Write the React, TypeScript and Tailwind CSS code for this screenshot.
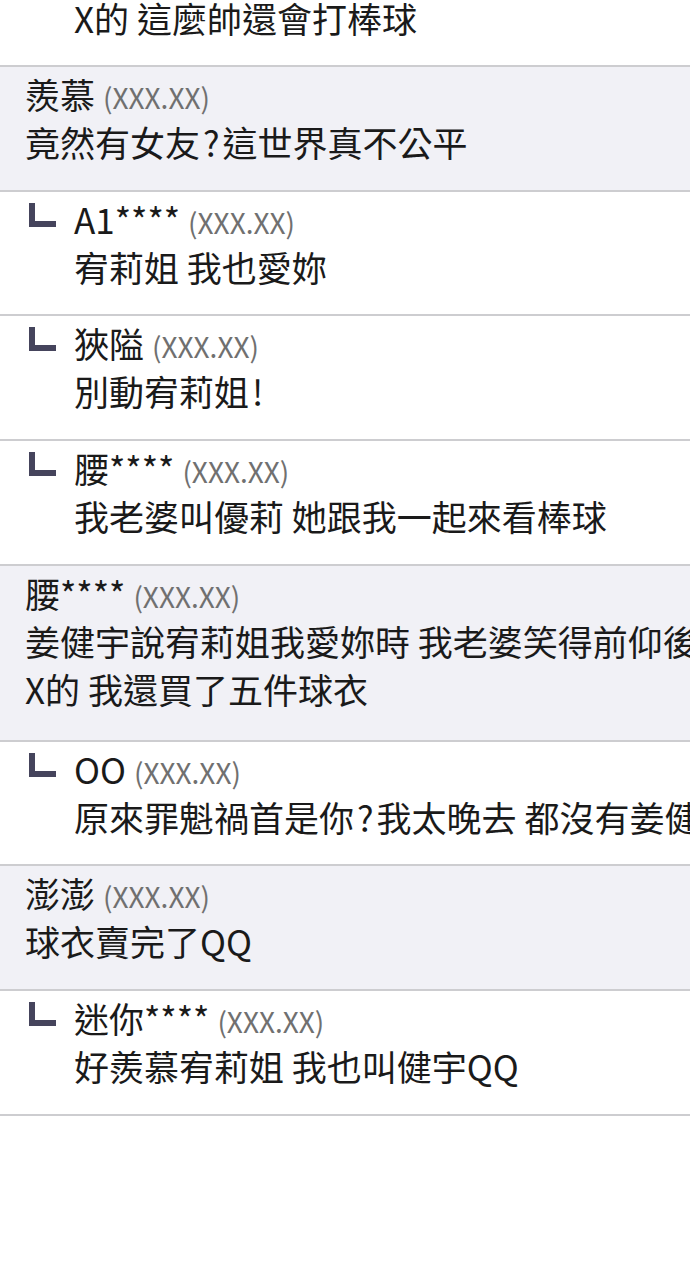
import React from "react";

type Row = { reply: boolean; name: string; lines: React.ReactNode[] };

const Q = () => <span className="px-[3px]">?</span>;
const E = () => <span className="pl-[3px] pr-[1px]">!</span>;

const rows: Row[] = [
  { reply: false, name: "羨慕", lines: [<>竟然有女友<Q />這世界真不公平</>] },
  { reply: true, name: "A1****", lines: ["宥莉姐 我也愛妳"] },
  { reply: true, name: "狹隘", lines: [<>別動宥莉姐<E /></>] },
  { reply: true, name: "腰****", lines: ["我老婆叫優莉 她跟我一起來看棒球"] },
  {
    reply: false,
    name: "腰****",
    lines: ["姜健宇說宥莉姐我愛妳時 我老婆笑得前仰後翻", "X的 我還買了五件球衣"],
  },
  { reply: true, name: "OO", lines: [<>原來罪魁禍首是你<Q />我太晚去 都沒有姜健宇的球衣了</>] },
  { reply: false, name: "澎澎", lines: ["球衣賣完了QQ"] },
  { reply: true, name: "迷你****", lines: ["好羨慕宥莉姐 我也叫健宇QQ"] },
];

function ReplyIcon() {
  return (
    <svg width="27" height="24" viewBox="0 0 27 24" className="absolute left-[29px] top-[11px]">
      <rect x="0" y="0" width="6" height="24" fill="#45445c" />
      <rect x="0" y="18" width="27" height="6" fill="#45445c" />
    </svg>
  );
}

export default function App() {
  return (
    <div
      className="w-[690px] h-[1280px] overflow-hidden bg-white text-[#1a1a1a]"
      style={{ fontFamily: '"Noto Sans CJK TC", "Noto Sans", sans-serif' }}
    >
      <div className="-mt-[6px] pb-[22.75px] pl-[74px] border-b-2 border-[#cdcdd0] whitespace-nowrap">
        <div className="text-[35px] leading-[48px]">X的 這麼帥還會打棒球</div>
      </div>
      {rows.map((r, i) => (
        <div
          key={i}
          className={
            (r.reply
              ? "relative bg-white pl-[74px] "
              : "relative bg-[#f1f1f6] pl-[25px] ") +
            (r.lines.length > 1 ? "pt-[3px] pb-[26.75px]" : "pt-[3px] pb-[23.75px]") +
            " border-b-2 border-[#cdcdd0] whitespace-nowrap"
          }
        >
          {r.reply && <ReplyIcon />}
          <div className="h-[48px] text-[35px] leading-[48px]">
            {r.name}
            <span className="text-[28px] leading-none text-[#707070] ml-[8px]">(XXX.XX)</span>
          </div>
          {r.lines.map((l, j) => (
            <div key={j} className="text-[35px] leading-[48px]">
              {l}
            </div>
          ))}
        </div>
      ))}
    </div>
  );
}
